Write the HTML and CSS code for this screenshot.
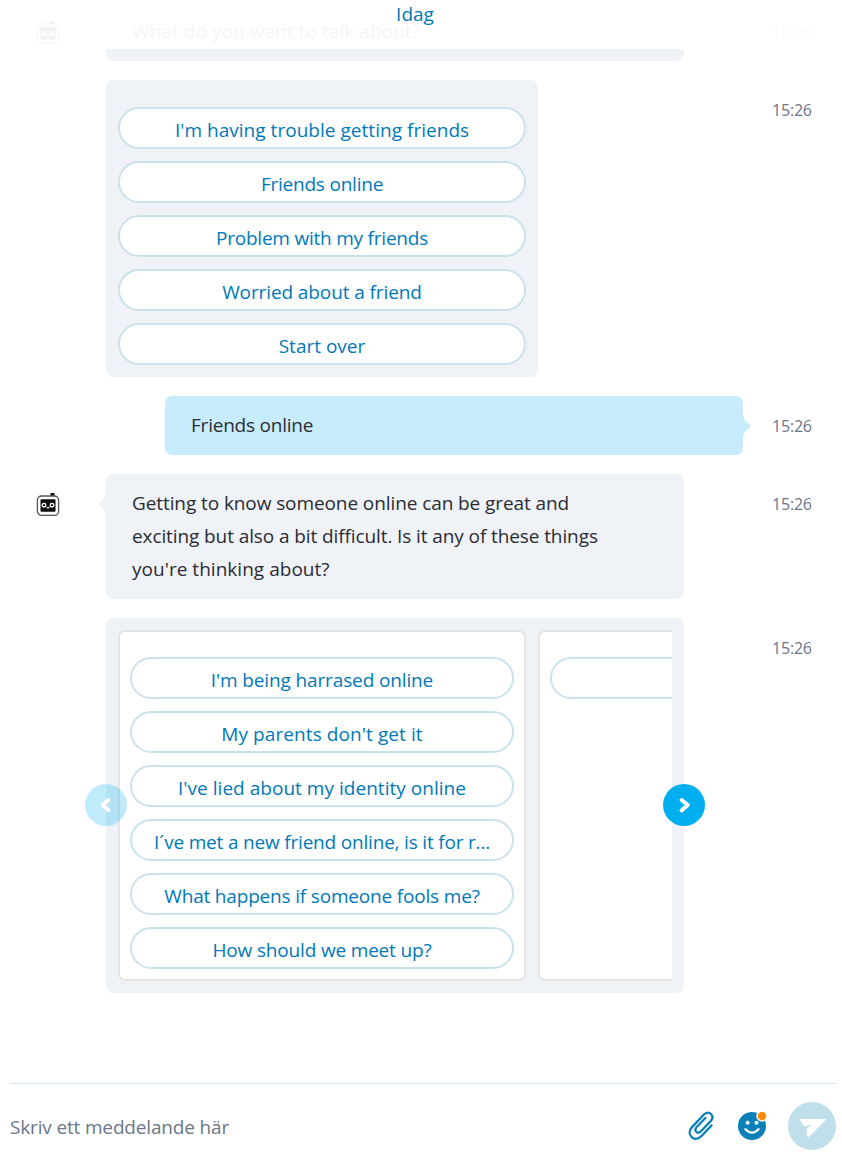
FILE: index.html
```html
<!DOCTYPE html>
<html lang="sv">
<head>
<meta charset="utf-8">
<title>Chat</title>
<link rel="stylesheet" href="styles.css">
</head>
<body>
<svg class="defs" width="0" height="0">
  <symbol id="bot" viewBox="0 0 24 24">
    <rect x="14.5" y="0" width="4" height="3" fill="#111"/>
    <rect x="1.400" y="3" width="21.200" height="19.400" rx="4.200" fill="#fff" stroke="#555" stroke-width="1.300"/>
    <rect x="4.500" y="6.300" width="15" height="12.400" rx="1" fill="#111"/>
    <circle cx="8" cy="12.200" r="1.800" fill="none" stroke="#fff" stroke-width="1.300"/>
    <circle cx="16" cy="12.200" r="1.800" fill="none" stroke="#fff" stroke-width="1.300"/>
    <path d="M10.700 14.300q1.300 1.200 2.600 0" fill="none" stroke="#fff" stroke-width="1.200"/>
  </symbol>
  <symbol id="tail" viewBox="0 0 8 26">
    <path d="M8 0C8 6 5.500 8.500 1.500 11.300Q-.8 13 1.500 14.700C5.500 17.500 8 20 8 26Z" fill="currentColor"/>
  </symbol>
</svg>
<main class="chat">
  <header class="day"><span>Idag</span></header>
  <section class="log">
    <article class="row">
      <svg class="avatar"><use href="#bot"/></svg>
      <div class="bubble wide"><svg class="tail"><use href="#tail"/></svg><p><span class="t1">What do you want to talk about?</span></p></div>
      <time>15:26</time>
    </article>
    <article class="row">
      <div class="bubble menu">
        <button><span class="b1">I'm having trouble getting friends</span></button>
        <button><span class="b2">Friends online</span></button>
        <button><span class="b3">Problem with my friends</span></button>
        <button><span class="b4">Worried about a friend</span></button>
        <button><span class="b5">Start over</span></button>
      </div>
      <time>15:26</time>
    </article>
    <article class="row">
      <div class="bubble wide mine"><svg class="tail"><use href="#tail"/></svg><p><span class="b2">Friends online</span></p></div>
      <time>15:26</time>
    </article>
    <article class="row">
      <svg class="avatar"><use href="#bot"/></svg>
      <div class="bubble wide"><svg class="tail"><use href="#tail"/></svg>
        <p><span class="t2">Getting to know someone online can be great and</span><br><span class="t3">exciting but also a bit difficult. Is it any of these things</span><br><span class="t4">you're thinking about?</span></p></div>
      <time>15:26</time>
    </article>
    <article class="row">
      <div class="bubble wide carousel">
        <div class="track">
          <div class="card">
            <button><span class="c1">I'm being harrased online</span></button>
            <button><span class="c2">My parents don't get it</span></button>
            <button><span class="c3">I've lied about my identity online</span></button>
            <button><span class="c4">I´ve met a new friend online, is it for r...</span></button>
            <button><span class="c5">What happens if someone fools me?</span></button>
            <button><span class="c6">How should we meet up?</span></button>
          </div>
          <div class="card"><button></button></div>
        </div>
        <svg class="arrow prev" viewBox="0 0 42 42"><circle cx="21" cy="21" r="21" fill="#00aff0"/><path d="M23.400 16L17.600 21L23.400 26" fill="none" stroke="#fff" stroke-width="4" stroke-linecap="round" stroke-linejoin="round"/></svg>
        <svg class="arrow next" viewBox="0 0 42 42"><circle cx="21" cy="21" r="21" fill="#00aff0"/><path d="M18.600 16L24.800 21L18.600 26.500" fill="none" stroke="#fff" stroke-width="4" stroke-linecap="round" stroke-linejoin="round"/></svg>
      </div>
      <time>15:26</time>
    </article>
  </section>
  <footer class="composer">
    <span class="placeholder"><span class="p1">Skriv ett meddelande här</span></span>
    <svg class="clip" viewBox="0 0 26 30"><path d="M23.500 14.500L13.800 24.700C10.500 28.100 6.500 28.800 3.700 26.200C.9 23.500 1 19.300 4 16.100L15.500 4C18 1.400 21 1.100 23 3C25 5 24.800 7.900 22.500 10.300L13 20.200C11.400 21.800 9.700 22.100 8.300 20.800C7 19.500 7.100 17.700 8.700 16L17.400 7" fill="none" stroke="#0a7fb8" stroke-width="2.300" stroke-linecap="round"/></svg>
    <svg class="smile" viewBox="0 0 30 30"><circle cx="14" cy="16" r="14" fill="#0a7fb8"/><circle cx="9.600" cy="12.800" r="2" fill="#fff"/><circle cx="18.500" cy="12.800" r="2" fill="#fff"/><path d="M7.400 19.200Q14 26 20.600 19.200" fill="none" stroke="#fff" stroke-width="2.200" stroke-linecap="round"/><circle cx="24" cy="6" r="5" fill="#ff8c00" stroke="#fff" stroke-width="1.500"/></svg>
    <svg class="send" viewBox="0 0 48 48"><circle cx="24" cy="24" r="24" fill="#c1deeb"/><path d="M12.700 17H37.200Q38.600 17 37.700 18.100L21 34.700Q19.600 35.800 19.200 34L18.600 26.400L24.500 22.900L16.400 24.300L12.100 18.400Q11.500 17 12.700 17Z" fill="#fff"/></svg>
  </footer>
</main>
</body>
</html>
```
FILE: styles.css
```css
* { box-sizing: border-box; }
body { margin: 0; background: #fff; font-family: "Open Sans", "Noto Sans", sans-serif; font-size: 19px; color: #2b2c33; }
.defs { position: absolute; }
.chat { position: relative; width: 842px; height: 1167px; display: flex; flex-direction: column; overflow: hidden; }
.day { position: absolute; z-index: 2; top: 0; left: 0; right: 12px; height: 49px; background: rgba(255,255,255,.95); color: #0078b9; text-align: center; line-height: 28px; }
.log { height: 1083px; padding-top: 2px; display: flex; flex-direction: column; gap: 19px; }
.row { display: grid; grid-template-columns: 106px 666px 70px; align-items: start; }
.avatar { grid-column: 1; grid-row: 1; width: 24px; height: 24px; margin: 19px 0 0 36px; }
.bubble { position: relative; grid-column: 2; grid-row: 1; background: #eff2f7; border-radius: 7px; }
.wide { width: 578px; }
.bubble p { margin: 0; padding: 13px 26px; line-height: 33px; white-space: nowrap; }
.bubble .tail { position: absolute; left: -8px; top: 17px; width: 8px; height: 26px; color: #eff2f7; }
.mine { background: #c7ecfd; margin-left: 59px; }
.bubble.mine .tail { left: auto; right: -8px; color: #c7ecfd; transform: scaleX(-1); }
time { grid-column: 3; grid-row: 1; padding-top: 18px; font-size: 16px; line-height: 24px; letter-spacing: -.2px; color: #6b7689; }
button { display: block; width: 100%; height: 42px; padding: 2px 0 0; border: 2px solid #c9e2ec; border-radius: 21px; background: #fff; font: inherit; line-height: 38px; color: #0078b9; text-align: center; white-space: nowrap; }
.menu { width: 432px; padding: 27px 12px 12px; display: flex; flex-direction: column; gap: 12px; }
.carousel { padding: 12px; }
.track { display: flex; gap: 12px; overflow: hidden; }
.card { flex: 0 0 408px; height: 351px; border: 2px solid #e5e5e5; border-radius: 7px; background: #fff; padding: 25px 10px 10px; display: flex; flex-direction: column; gap: 12px; }
.arrow { position: absolute; top: 166px; width: 42px; height: 42px; }
.prev { left: -21px; }
.prev circle { fill-opacity: .25; }
.next { right: -21px; }
.composer { height: 84px; margin: 0 6px 0 10px; border-top: 1px solid #dae3ec; display: flex; align-items: center; }
.placeholder { flex: 1; color: #6b7689; padding-top: 3px; }
.clip { width: 26px; height: 30px; margin-right: 24px; }
.smile { width: 30px; height: 30px; margin: 0 20px 2px 0; }
.send { width: 48px; height: 48px; }

/* tracking per label */
.t1 { letter-spacing: .06px; }
.t2 { letter-spacing: -.09px; }
.t3 { letter-spacing: -.1px; }
.t4 { letter-spacing: .03px; }
.b1 { letter-spacing: .03px; }
.b2 { letter-spacing: -.22px; }
.b3 { letter-spacing: -.22px; }
.b4 { letter-spacing: -.1px; }
.c1 { letter-spacing: -.13px; }
.c2 { letter-spacing: .09px; }
.c3 { letter-spacing: .03px; }
.c4 { letter-spacing: -.19px; }
.c5 { letter-spacing: -.18px; }
.c6 { letter-spacing: -.17px; }
.p1 { letter-spacing: -.16px; }
```
